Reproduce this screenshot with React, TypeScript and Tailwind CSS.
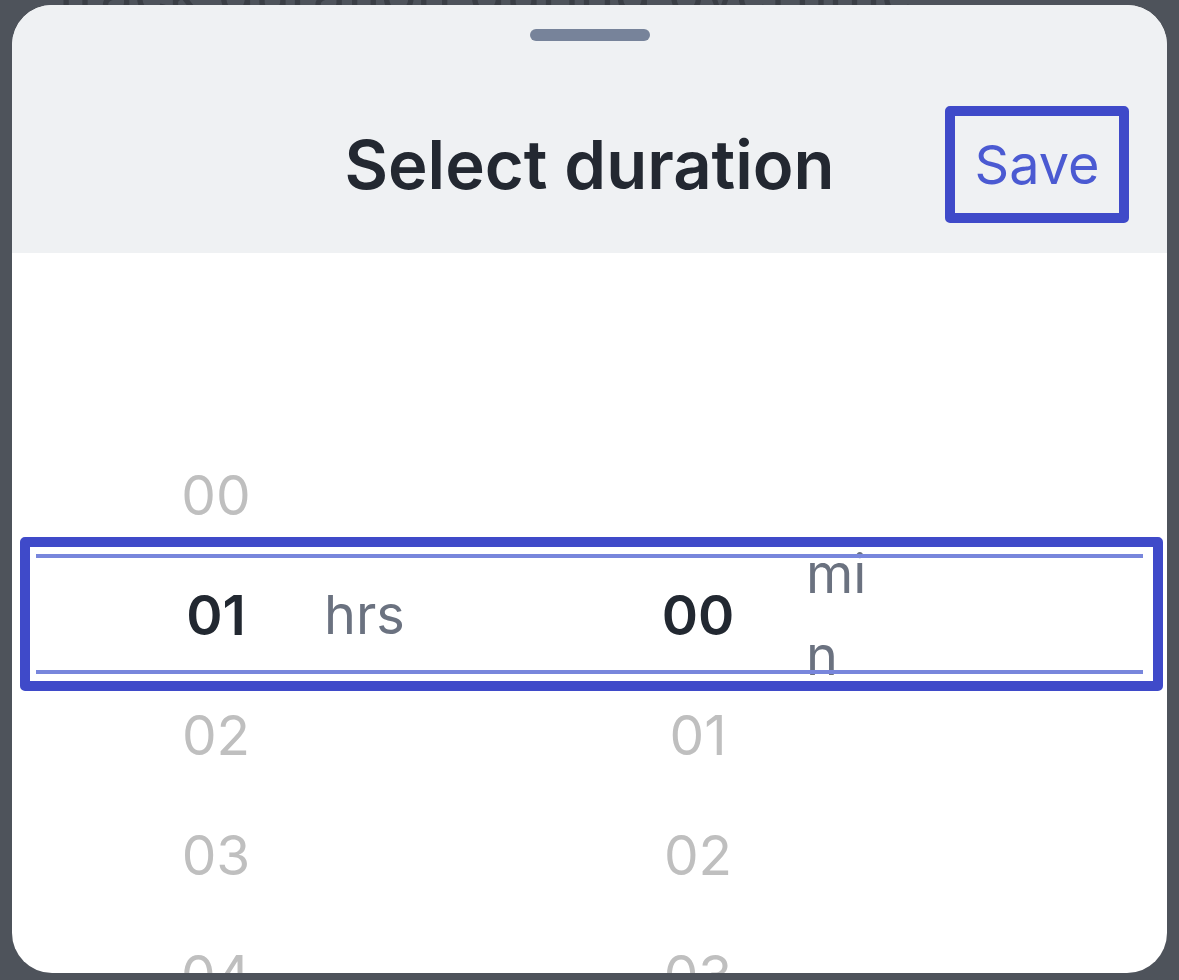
import React from "react";

const HOURS = ["00", "01", "02", "03", "04"];
const MINUTES = ["00", "01", "02", "03"];

function Wheel({
  items,
  selected,
  label,
  offset,
}: {
  items: string[];
  selected: number;
  label: string;
  offset: string;
}) {
  return (
    <div className={`flex w-[482px] flex-col ${offset}`}>
      {items.map((v, i) => (
        <div key={v} className="flex h-[120px] shrink-0 items-center">
          <div
            className={
              i === selected
                ? "w-[160px] text-center text-[55px] font-semibold text-[#222831]"
                : "w-[160px] text-center text-[55px] font-normal text-[#bfbfbf]"
            }
          >
            {v}
          </div>
          {i === selected && (
            <div className="ml-[28px] w-[86px] break-all text-[54px] leading-[82px] text-[#6b7280]">
              {label}
            </div>
          )}
        </div>
      ))}
    </div>
  );
}

export default function App() {
  return (
    <div
      className="h-[980px] w-[1179px] overflow-hidden bg-[#4e535b] px-[12px]"
      style={{ fontFamily: "Inter, 'Noto Sans', sans-serif" }}
    >
      {/* page text behind the sheet */}
      <div className="h-[5px] overflow-hidden">
        <div className="-mt-[38px] ml-[46px] whitespace-nowrap text-[60px] leading-[60px] text-[#3a3e45]">
          track duration during overtime
        </div>
      </div>

      <div className="flex h-[968px] flex-col overflow-hidden rounded-[40px] bg-white">
        <header className="flex h-[248px] shrink-0 flex-col bg-[#eff1f3]">
          <div className="mx-auto mt-[24px] h-[12px] w-[120px] rounded-full bg-[#77839a]" />
          <div className="mt-[65px] grid h-[117px] grid-cols-[1fr_auto_1fr] items-center">
            <div />
            <h1 className="text-[67px] font-semibold leading-none text-[#232831]">
              Select duration
            </h1>
            <div className="flex justify-end pr-[38px]">
              <button
                type="button"
                className="flex h-[117px] w-[184px] items-center justify-center rounded-[5px] border-[10px] border-[#3f4ac9] text-[54px] leading-none text-[#4b5ad2]"
              >
                Save
              </button>
            </div>
          </div>
        </header>

        <div className="relative flex-1">
          <div className="flex pl-[124px]">
            <Wheel items={HOURS} selected={1} label="hrs" offset="pt-[182px]" />
            <Wheel items={MINUTES} selected={0} label="min" offset="pt-[302px]" />
          </div>

          {/* selection band */}
          <div className="absolute left-[8px] right-[4px] top-[284px] flex h-[154px] flex-col justify-between rounded-[5px] border-[10px] border-[#3f4ac9] py-[7px] pl-[6px] pr-[10px]">
            <div className="h-[4px] bg-[#7886dc]" />
            <div className="h-[4px] bg-[#7886dc]" />
          </div>
        </div>
      </div>
    </div>
  );
}
